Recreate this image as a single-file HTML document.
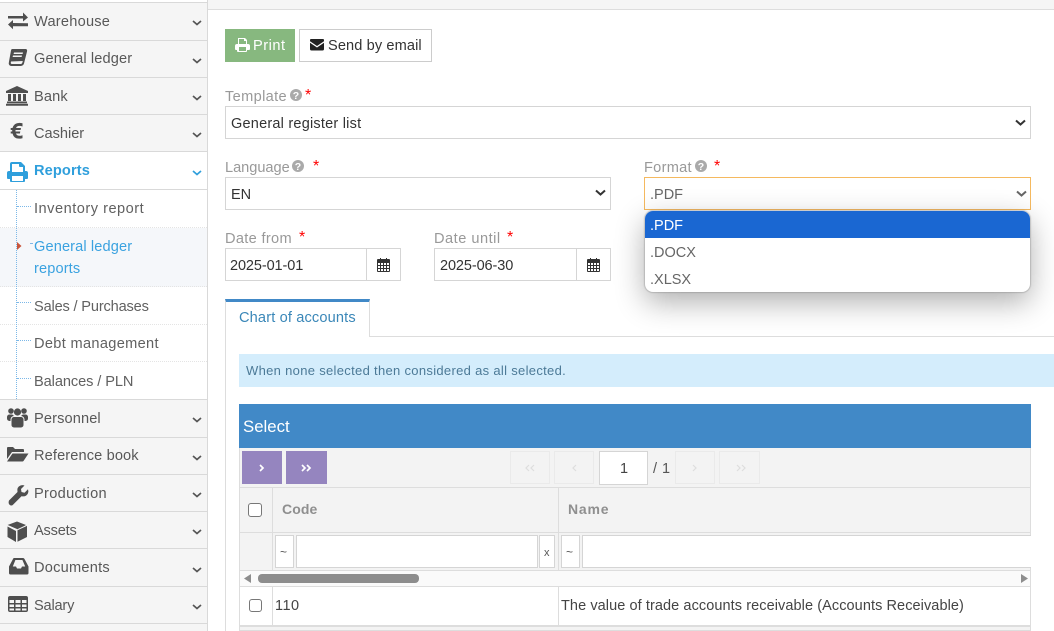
<!DOCTYPE html>
<html><head><meta charset="utf-8"><style>
html,body{margin:0;padding:0;background:#fff}
#p{position:relative;width:1054px;height:631px;overflow:hidden;background:#fff;font-family:"Liberation Sans",sans-serif;font-size:14.5px;color:#393939}
#p div,#p span.t,#p svg{position:absolute}
.t{white-space:nowrap;line-height:20px;margin-top:1px}
.b{box-sizing:border-box;border:1px solid #d5d5d5;background:#fff}
.nav{left:0;width:207px;background:#f5f5f5;box-sizing:border-box;border-bottom:1px solid #d9d9d9;height:38px}
.n{left:34px;color:#585858;font-size:14.6px;letter-spacing:.12px}
.s{left:34px;color:#616161;font-size:14.6px;letter-spacing:.12px}
.l{color:#999;font-size:14.6px;letter-spacing:.1px}
#p span.r{color:#f00;font-size:16px;margin-top:0}
.dash{border-top:1px dotted #e4e4e4;left:0;width:207px;height:0}
</style></head><body><div id="p">
<div style="left:208px;top:0;width:846px;height:9px;background:#f5f5f5;border-bottom:1px solid #ddd"></div>
<div style="left:207px;top:0;width:1px;height:631px;background:#d9d9d9"></div>
<div style="left:0;top:2px;width:207px;height:1px;background:#d9d9d9"></div>

<div class="nav" style="top:3px"></div>
<div class="nav" style="top:41px;height:37px"></div>
<div class="nav" style="top:78px;height:37px"></div>
<div class="nav" style="top:115px;height:37px"></div>
<div class="nav" style="top:152px;background:#fff"></div>
<div style="left:0;top:228px;width:207px;height:59px;background:#f5f7fa"></div>
<div class="dash" style="top:227px"></div><div class="dash" style="top:286px"></div><div class="dash" style="top:324px"></div><div class="dash" style="top:361px"></div>
<div class="nav" style="top:399px;height:39px;border-top:1px solid #d9d9d9"></div>
<div class="nav" style="top:438px;height:37px"></div>
<div class="nav" style="top:475px;height:37px"></div>
<div class="nav" style="top:512px;height:37px"></div>
<div class="nav" style="top:549px;height:38px"></div>
<div class="nav" style="top:587px;height:37px"></div>
<div style="left:0;top:624px;width:207px;height:7px;background:#f5f5f5"></div>

<span class="t n" style="top:11px;letter-spacing:.23px">Warehouse</span>
<span class="t n" style="top:48px">General ledger</span>
<span class="t n" style="top:86px">Bank</span>
<span class="t n" style="top:123px;letter-spacing:-.02px">Cashier</span>
<span class="t n" style="top:160px;color:#2f9fdc;font-weight:bold">Reports</span>
<span class="t s" style="top:198px;letter-spacing:.5px">Inventory report</span>
<span class="t s" style="top:236px;color:#3aa2e0">General ledger</span>
<span class="t s" style="top:258px;color:#3aa2e0">reports</span>
<span class="t s" style="top:296px;letter-spacing:-.17px">Sales / Purchases</span>
<span class="t s" style="top:333px;letter-spacing:.32px">Debt management</span>
<span class="t s" style="top:371px;letter-spacing:-.09px">Balances / PLN</span>
<span class="t n" style="top:408px">Personnel</span>
<span class="t n" style="top:445px">Reference book</span>
<span class="t n" style="top:483px;letter-spacing:.32px">Production</span>
<span class="t n" style="top:520px;letter-spacing:-.2px">Assets</span>
<span class="t n" style="top:557px;letter-spacing:.23px">Documents</span>
<span class="t n" style="top:595px;letter-spacing:-.2px">Salary</span>

<!-- tree lines -->
<div style="left:16px;top:190px;width:0;height:209px;border-left:1px dotted #7cb8e8"></div>
<div style="left:17px;top:206px;width:14px;border-top:1px dotted #7cb8e8"></div>
<div style="left:30px;top:243px;width:2px;border-top:1px dotted #7cb8e8"></div>
<div style="left:17px;top:302px;width:14px;border-top:1px dotted #7cb8e8"></div>
<div style="left:17px;top:340px;width:14px;border-top:1px dotted #7cb8e8"></div>
<div style="left:17px;top:378px;width:14px;border-top:1px dotted #7cb8e8"></div>
<svg style="left:16px;top:241px" width="8" height="10"><path d="M1 1 L5.500 5 L1 9Z" fill="#c8553a"/></svg>

<!-- chevrons -->
<svg style="left:0;top:0" width="207" height="631" fill="none" stroke="#555" stroke-width="1.700">
<path d="M193 21l4 3.500 4-3.500M193 59l4 3.500 4-3.500M193 96l4 3.500 4-3.500M193 133l4 3.500 4-3.500"/>
<path stroke="#2f9fdc" d="M193 171l4 3.500 4-3.500"/>
<path d="M193 418l4 3.500 4-3.500M193 456l4 3.500 4-3.500M193 493l4 3.500 4-3.500M193 530l4 3.500 4-3.500M193 568l4 3.500 4-3.500M193 605l4 3.500 4-3.500"/>
</svg>

<!-- nav icons -->
<svg style="left:0;top:0" width="34" height="631" fill="#4e4e4e">
<path d="M8 16h15v-3.500l5 5-5 4v-3H8zM28 23.300v3H13v3l-5-4.800 5-4.500v3z"/>
<path fill-rule="evenodd" d="M12 49h14q1.500 .5 1 2.500l-3 12q-.5 2-3 2.500H11q-3-.5-2-4.500l2-11q.3-1.500 1-1.500zm2 3.500l-.4 1.500h9l.4-1.500zm-1 3l-.4 1.500h9l.4-1.500zM11 61.500q-.8 2.500 1 2.500h9q1 0 1.400-1.500l.4-1.500z"/>
<path d="M17 86l11 5v2H6v-2zM8 94h3v7H8zM13 94h3v7h-3zM18 94h3v7h-3zM23 94h3v7h-3zM7 101.500h20v1.800H7zM6 103.800h22v2H6z"/>
<path d="M22.500 126.500q-5-1.700-6.500 1.500h5l-.4 2h-5.100v1.500h4.800l-.4 2h-4q1.500 3.500 6.600 1.700v3q-8.300 2-10-4.700h-1.800v-2h1.500v-1.500h-1.500v-2h1.800q2-6.600 10-4.800z"/>
<path fill="#2f9fdc" fill-rule="evenodd" d="M12 162h9l4 4v5h1q2 0 2 2v5q0 1-1 1h-2v2q0 1-1 1H11q-1 0-1-1v-2H8q-1 0-1-1v-5q0-2 2-2h1v-7q0-2 2-2zm0 2v8h11v-5h-3q-1 0-1-1v-2zm0 12v5h11v-5z"/>
<circle cx="11" cy="411" r="2.800"/><circle cx="24" cy="411" r="2.800"/><circle cx="17.500" cy="412" r="3.600"/>
<rect x="7" y="414.500" width="7" height="6.500" rx="2.500"/><rect x="21" y="414.500" width="7" height="6.500" rx="2.500"/>
<rect x="11" y="416.500" width="13" height="11.500" rx="3" stroke="#f5f5f5" stroke-width="1"/>
<path d="M7 459v-11q0-1 1-1h5l2 2h8q1 0 1 1v2H12l-5 7zM7 461.500l5.500-8h16l-5 7.500q-.500.500-1 .500z"/>
<path d="M9 500.500l8.500-8.500q-1-5 3-6.500 2-.7 4 0l-3.500 3.500 .5 3 3 .7 3.500-3.500q.7 2 0 4-1.800 4-6.500 3l-8.500 8.500q-1.500 1.500-3.500 0-1.500-1.700-.5-4.200z"/>
<path d="M17 522l10 4v11l-10 5zM16 542l-8.500-5v-10.500l8.500 4.500zM17 521.500l9 3.500-9 4-9.500-4z" />
<path stroke="#f5f5f5" stroke-width="1" fill="none" d="M7.500 525.500l9.500 4.500 9.500-4.500M17 530v12"/>
<path transform="translate(0 -2)" fill-rule="evenodd" d="M13 560h10q1 0 1.500 1l4 7.500v6.500q0 1.500-1.500 1.500H10.500Q9 576.500 9 575v-6.500l4-7.500q.3-1 1-1zm-.2 8.500h3.200l1 2h4l1-2h3.200l-2.800-6.500h-7z"/>
<path transform="translate(0 -1)" fill-rule="evenodd" d="M10 597h16q2 0 2 2v12q0 2-2 2H10q-2 0-2-2V599q0-2 2-2zm-.500 4v3h4.500v-3zm6 0v3h5v-3zm6.500 0v3h4.500v-3zm-12.500 4.500v2.500h4.500v-2.500zm6 0v2.500h5v-2.500zm6.500 0v2.500h4.500v-2.500zM9.500 609.500v2h4.500v-2zm6 0v2h5v-2zm6.500 0v2h4.500v-2z"/>
</svg>

<!-- buttons -->
<div style="left:225px;top:29px;width:70px;height:33px;background:#87b87f"></div>
<svg style="left:235px;top:38px" width="15" height="14" fill="#fff"><path fill-rule="evenodd" d="M3 0h7l2 2v4h1q2 0 2 2v3q0 1-1 1h-2v1q0 1-1 1H3q-1 0-1-1v-1H1q-1 0-1-1V8q0-2 2-2h1zm1 1v5h7V3H9V1zm0 8v4h7V9z"/></svg>
<span class="t" style="left:253px;top:35px;color:#fff;font-size:14.6px;letter-spacing:.5px">Print</span>
<div class="b" style="left:299px;top:29px;width:133px;height:33px;border-color:#ccc"></div>
<svg style="left:310px;top:39px" width="14" height="12" fill="#222"><path d="M1 0h12q1 0 1 1v1.300L7 7 0 2.300V1q0-1 1-1zM0 3.800l7 4.700 7-4.700V10q0 1.500-1.500 1.500h-11Q0 11.500 0 10z"/></svg>
<span class="t" style="left:328px;top:35px;color:#333;font-size:14.6px;letter-spacing:.1px">Send by email</span>

<!-- form -->
<span class="t l" style="left:225px;top:86px;letter-spacing:.35px">Template</span>
<svg style="left:290px;top:89px" width="13" height="13"><circle cx="6" cy="6" r="6" fill="#aaa"/><text x="6" y="10" font-size="10.500" font-weight="bold" text-anchor="middle" fill="#fff" font-family="Liberation Sans">?</text></svg>
<span class="t r" style="left:305px;top:86px">*</span>
<div class="b" style="left:225px;top:106px;width:806px;height:33px"></div>
<span class="t" style="left:231px;top:113px;letter-spacing:.22px;color:#333">General register list</span>
<span class="t l" style="left:225px;top:157px;letter-spacing:-.03px">Language</span>
<svg style="left:292px;top:160px" width="13" height="13"><circle cx="6" cy="6" r="6" fill="#aaa"/><text x="6" y="10" font-size="10.500" font-weight="bold" text-anchor="middle" fill="#fff" font-family="Liberation Sans">?</text></svg>
<span class="t r" style="left:313px;top:157px">*</span>
<div class="b" style="left:225px;top:177px;width:386px;height:33px"></div>
<span class="t" style="left:231px;top:184px;color:#333">EN</span>
<span class="t l" style="left:644px;top:157px;letter-spacing:.27px">Format</span>
<svg style="left:695px;top:160px" width="13" height="13"><circle cx="6" cy="6" r="6" fill="#aaa"/><text x="6" y="10" font-size="10.500" font-weight="bold" text-anchor="middle" fill="#fff" font-family="Liberation Sans">?</text></svg>
<span class="t r" style="left:714px;top:157px">*</span>
<div class="b" style="left:644px;top:177px;width:387px;height:33px;border-color:#f5b95f"></div>
<span class="t" style="left:650px;top:184px;color:#666">.PDF</span>
<span class="t l" style="left:225px;top:228px;letter-spacing:.32px">Date from</span>
<span class="t r" style="left:299px;top:228px">*</span>
<div class="b" style="left:225px;top:248px;width:176px;height:33px"></div>
<div style="left:366px;top:248px;width:1px;height:33px;background:#d5d5d5"></div>
<span class="t" style="left:230px;top:255px;color:#333;letter-spacing:-.1px">2025-01-01</span>
<span class="t l" style="left:434px;top:228px;letter-spacing:.5px">Date until</span>
<span class="t r" style="left:507px;top:228px">*</span>
<div class="b" style="left:434px;top:248px;width:177px;height:33px"></div>
<div style="left:576px;top:248px;width:1px;height:33px;background:#d5d5d5"></div>
<span class="t" style="left:440px;top:255px;color:#333;letter-spacing:-.1px">2025-06-30</span>
<svg style="left:0;top:0" width="1054" height="300" fill="none">
<path stroke="#333" stroke-width="2" d="M1016 120.500l4.500 4 4.500-4M596 190.500l4.500 4 4.500-4"/>
<path stroke="#666" stroke-width="2" d="M1017 191.500l4.500 4 4.500-4"/>
<g fill="#333"><path fill-rule="evenodd" d="M378 259h2v-1h1v1h5v-1h1v1h2q1 0 1 1v11q0 1-1 1h-11q-1 0-1-1v-11q0-1 1-1zm0 4v2h2v-2zm3 0v2h2v-2zm3 0v2h2v-2zm3 0v2h2v-2zm-9 3v2h2v-2zm3 0v2h2v-2zm3 0v2h2v-2zm3 0v2h2v-2zm-9 3v2h2v-2zm3 0v2h2v-2zm3 0v2h2v-2zm3 0v2h2v-2z"/></g>
<g fill="#333" transform="translate(210 0)"><path fill-rule="evenodd" d="M378 259h2v-1h1v1h5v-1h1v1h2q1 0 1 1v11q0 1-1 1h-11q-1 0-1-1v-11q0-1 1-1zm0 4v2h2v-2zm3 0v2h2v-2zm3 0v2h2v-2zm3 0v2h2v-2zm-9 3v2h2v-2zm3 0v2h2v-2zm3 0v2h2v-2zm3 0v2h2v-2zm-9 3v2h2v-2zm3 0v2h2v-2zm3 0v2h2v-2zm3 0v2h2v-2z"/></g>
</svg>

<!-- tab area -->
<div style="left:225px;top:336px;width:829px;height:1px;background:#ddd"></div>
<div style="left:225px;top:337px;width:1px;height:294px;background:#ddd"></div>
<div style="left:225px;top:299px;width:145px;height:38px;box-sizing:border-box;background:#fff;border:1px solid #ddd;border-top:3px solid #4189c7;border-bottom:0"></div>
<span class="t" style="left:239px;top:307px;color:#3a87b8;font-size:14.6px;letter-spacing:.14px">Chart of accounts</span>
<div style="left:239px;top:354px;width:815px;height:33px;background:#d4edfc"></div>
<span class="t" style="left:246px;top:360px;color:#4c7a97;font-size:13px;letter-spacing:.31px">When none selected then considered as all selected.</span>

<!-- grid -->
<div style="left:239px;top:404px;width:792px;height:44px;background:#4189c7"></div>
<span class="t" style="left:243px;top:416px;color:#fff;font-size:16.800px">Select</span>
<div style="left:239px;top:448px;width:792px;height:183px;box-sizing:border-box;border:1px solid #ddd;border-top:0;background:#f3f3f3"></div>
<div style="left:242px;top:451px;width:40px;height:33px;background:#9585bf"></div>
<div style="left:286px;top:451px;width:41px;height:33px;background:#9585bf"></div>
<div class="b" style="left:510px;top:451px;width:40px;height:33px;background:#f3f3f3;border-color:#eaeaea"></div>
<div class="b" style="left:554px;top:451px;width:40px;height:33px;background:#f3f3f3;border-color:#eaeaea"></div>
<div class="b" style="left:675px;top:451px;width:40px;height:33px;background:#f3f3f3;border-color:#eaeaea"></div>
<div class="b" style="left:719px;top:451px;width:41px;height:33px;background:#f3f3f3;border-color:#eaeaea"></div>
<div class="b" style="left:599px;top:451px;width:49px;height:34px"></div>
<span class="t" style="left:620px;top:458px;color:#444">1</span>
<span class="t" style="left:653px;top:458px;color:#555;letter-spacing:.5px">/ 1</span>
<svg style="left:0;top:440px" width="1054" height="50" fill="none" stroke-width="1.700">
<g stroke="#fff"><path d="M260 25l3 3-3 3M302 25l3 3-3 3M307 25l3 3-3 3"/></g>
<g stroke="#ddd" stroke-width="1.200"><path d="M534 25l-3 3 3 3M529 25l-3 3 3 3M576 25l-3 3 3 3M693 25l3 3-3 3M737 25l3 3-3 3M742 25l3 3-3 3"/></g>
</svg>
<div style="left:240px;top:487px;width:790px;height:1px;background:#ddd"></div>
<div style="left:240px;top:532px;width:790px;height:1px;background:#ddd"></div>
<div style="left:272px;top:487px;width:1px;height:140px;background:#ddd"></div>
<div style="left:558px;top:487px;width:1px;height:140px;background:#ddd"></div>
<div class="b" style="left:248px;top:503px;width:14px;height:14px;border:1px solid #777;border-radius:3px"></div>
<span class="t" style="left:282px;top:498px;color:#8f8f8f;font-weight:bold;font-size:14px;letter-spacing:.1px">Code</span>
<span class="t" style="left:568px;top:498px;color:#8f8f8f;font-weight:bold;font-size:14px;letter-spacing:.8px">Name</span>
<div class="b" style="left:275px;top:535px;width:19px;height:33px;background:#fff"></div>
<div class="b" style="left:296px;top:535px;width:242px;height:33px"></div>
<div class="b" style="left:539px;top:535px;width:16px;height:33px"></div>
<div class="b" style="left:561px;top:535px;width:19px;height:33px"></div>
<div class="b" style="left:582px;top:535px;width:449px;height:33px;border-right:0"></div>
<span class="t" style="left:280px;top:541px;font-size:12px;color:#555">~</span>
<span class="t" style="left:566px;top:541px;font-size:12px;color:#555">~</span>
<span class="t" style="left:544px;top:542px;font-size:11px;color:#555">x</span>
<div style="left:240px;top:570px;width:790px;height:17px;box-sizing:border-box;background:#fafafa;border-top:1px solid #ddd;border-bottom:1px solid #ddd"></div>
<div style="left:258px;top:574px;width:161px;height:9px;border-radius:4px;background:#8d8d8d"></div>
<svg style="left:240px;top:572px" width="790" height="14" fill="#8d8d8d"><path d="M4 6.500l7-4.500v9zM781 2l7 4.500-7 4.500z"/></svg>
<div style="left:240px;top:587px;width:790px;height:38px;background:#fff"></div>
<div style="left:272px;top:587px;width:1px;height:38px;background:#ddd"></div>
<div style="left:558px;top:587px;width:1px;height:38px;background:#ddd"></div>
<div class="b" style="left:249px;top:599px;width:13px;height:13px;border:1px solid #777;border-radius:3px"></div>
<span class="t" style="left:275px;top:595px;color:#444;letter-spacing:.5px">110</span>
<span class="t" style="left:561px;top:595px;color:#444;letter-spacing:.08px">The value of trade accounts receivable (Accounts Receivable)</span>
<div style="left:240px;top:625px;width:790px;height:2px;background:#ddd"></div>

<!-- dropdown -->
<div style="left:645px;top:211px;width:385px;height:81px;background:#fff;border-radius:8px;box-shadow:0 0 1px 1px rgba(120,120,120,.35),0 10px 30px rgba(0,0,0,.32);overflow:hidden">
<div style="left:0;top:0;width:385px;height:27px;background:#1a67d2"></div>
</div>
<span class="t" style="left:650px;top:215px;color:#fff">.PDF</span>
<span class="t" style="left:650px;top:242px;color:#666">.DOCX</span>
<span class="t" style="left:650px;top:269px;color:#666">.XLSX</span>
</div></body></html>
